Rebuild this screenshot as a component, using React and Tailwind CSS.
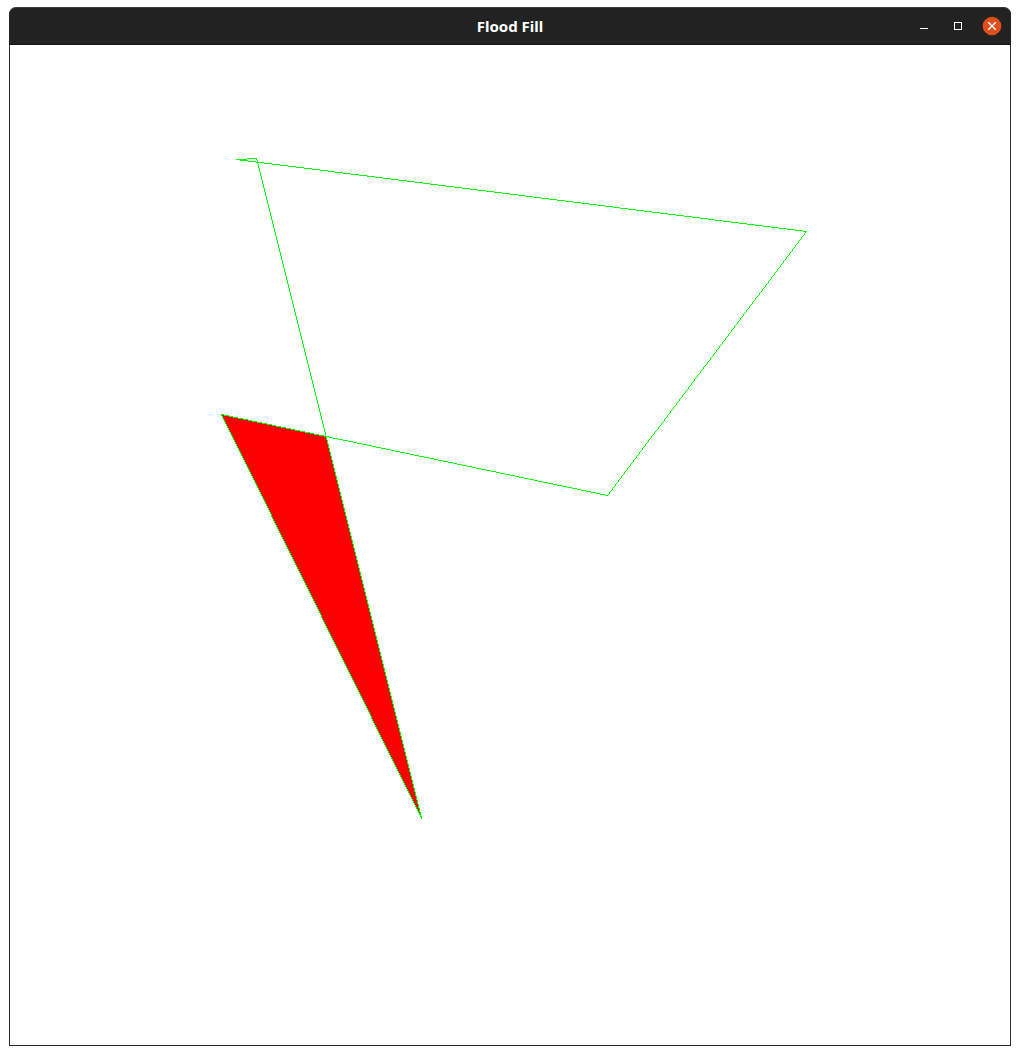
import React from "react";

const VERTICES = [
  [226, 114],
  [796, 186],
  [597, 450],
  [211, 369],
  [411, 773],
  [246, 113],
];
const FILLED = "211.5,369.5 315.5,391.5 411.5,773.5";

// Rasterises one edge into unit squares, one per step along its longer axis.
function edgePath([x0, y0], [x1, y1]) {
  const steps = Math.max(Math.abs(x1 - x0), Math.abs(y1 - y0));
  let d = "";
  for (let i = 0; i <= steps; i++) {
    const x = Math.round(x0 + ((x1 - x0) * i) / steps);
    const y = Math.round(y0 + ((y1 - y0) * i) / steps);
    d += `M${x} ${y}h1v1h-1z`;
  }
  return d;
}

const OUTLINE = VERTICES.map((v, i) => edgePath(v, VERTICES[(i + 1) % VERTICES.length]));

function TitleBar() {
  return (
    <header className="grid h-[38px] grid-cols-[1fr_auto_1fr] items-center rounded-t-[7px] border-t border-b border-t-[#3a3a3a] border-b-[#161616] bg-[#222222] px-[9px]">
      <span />
      <h1 className="text-[15px] leading-5 font-bold text-white">Flood Fill</h1>
      <div className="flex items-center justify-end gap-3.5">
        <button type="button" aria-label="Minimize" className="size-5">
          <svg viewBox="0 0 20 20" className="size-5" shapeRendering="crispEdges">
            <rect x="6" y="12" width="8" height="1" fill="#ffffff" />
          </svg>
        </button>
        <button type="button" aria-label="Maximize" className="size-5">
          <svg viewBox="0 0 20 20" className="size-5" shapeRendering="crispEdges">
            <rect x="6.5" y="6.5" width="7" height="7" fill="none" stroke="#ffffff" />
          </svg>
        </button>
        <button type="button" aria-label="Close" className="size-5">
          <svg viewBox="0 0 20 20" className="size-5">
            <circle cx="10" cy="10" r="9.3" fill="#e04f1b" />
            <path d="M6.2 6.2l7.6 7.6M13.8 6.2l-7.6 7.6" stroke="#ffffff" strokeWidth="1.4" />
          </svg>
        </button>
      </div>
    </header>
  );
}

function Canvas() {
  return (
    <main className="border-x border-b border-[#2b2b2b] bg-white">
      <svg
        viewBox="0 0 1000 1000"
        className="block w-full"
        shapeRendering="crispEdges"
        role="img"
        aria-label="Flood filled polygon"
      >
        <polygon points={FILLED} fill="#ff0000" />
        {OUTLINE.map((d, i) => (
          <path key={i} d={d} fill="#00ff00" />
        ))}
      </svg>
    </main>
  );
}

export default function App() {
  return (
    <div className="bg-white px-[9px] pt-[7px] pb-[9px] font-['Noto_Sans','Open_Sans',sans-serif]">
      <TitleBar />
      <Canvas />
    </div>
  );
}
